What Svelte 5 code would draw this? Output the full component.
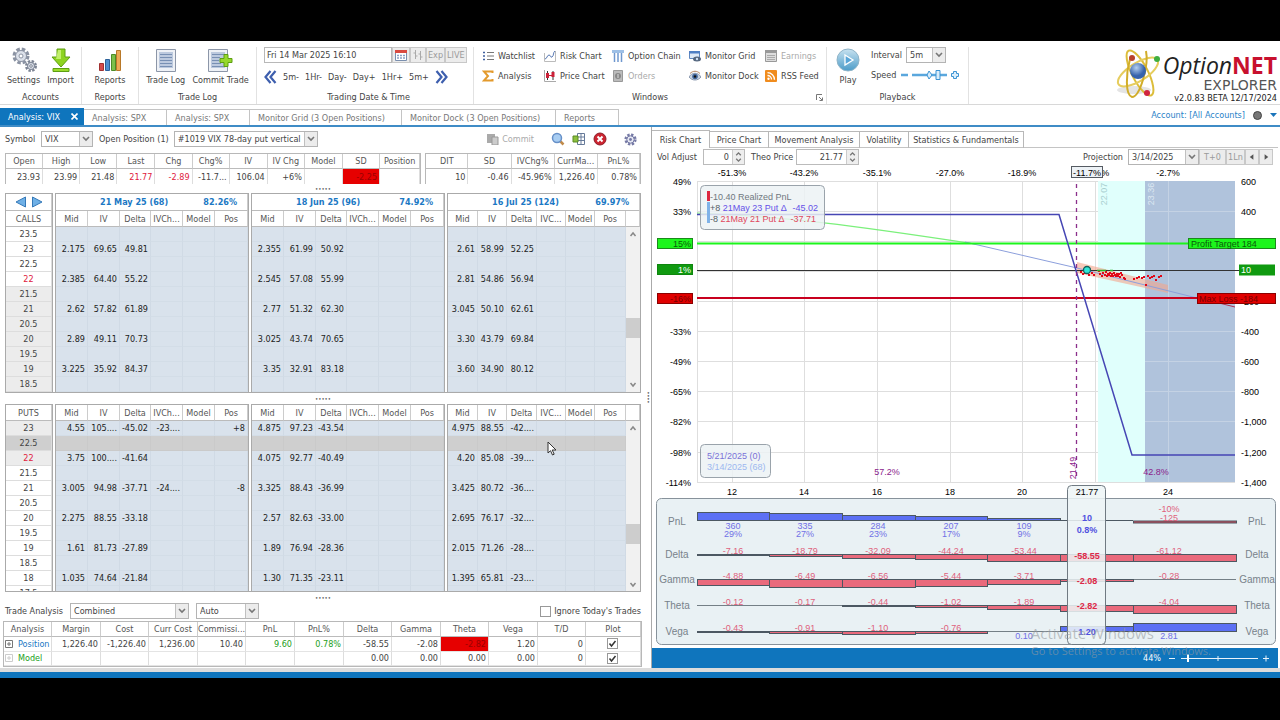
<script>
  const sep = (h, rows, cols) => ({ h, rows, cols });

  const quotes = sep(
    ['Open', 'High', 'Low', 'Last', 'Chg', 'Chg%', 'IV', 'IV Chg', 'Model', 'SD', 'Position'],
    ['23.93', '23.99', '21.48', '21.77', '-2.89', '-11.7...', '106.04', '+6%', '', '-2.25', ''],
    [37, 37, 37, 38, 37, 37, 38, 37, 38, 37, 40]
  );
  const trade = sep(
    ['DIT', 'SD', 'IVChg%', 'CurrMa...', 'PnL%'],
    ['10', '-0.46', '-45.96%', '1,226.40', '0.78%'],
    [42, 43, 43, 43, 42]
  );

  const wide = [32, 32, 31, 32, 32, 33];
  const tight = [30, 29, 30, 29, 29, 31, 14];

  const callStrikes = ['23.5', '23', '22.5', '22', '21.5', '21', '20.5', '20', '19.5', '19', '18.5'];
  const putStrikes = ['23', '22.5', '22', '21.5', '21', '20.5', '20', '19.5', '19', '18.5', '18', '17.5'];

  const expiries = [
    {
      name: '21 May 25 (68)', pct: '82.26%', ivch: 'IVCh...', cols: wide,
      calls: { 23: ['2.175', '69.65', '49.81'], 22: ['2.385', '64.40', '55.22'], 21: ['2.62', '57.82', '61.89'], 20: ['2.89', '49.11', '70.73'], 19: ['3.225', '35.92', '84.37'] },
      puts: { 23: ['4.55', '105....', '-45.02', '-23....', '', '+8'], 22: ['3.75', '100....', '-41.64'], 21: ['3.005', '94.98', '-37.71', '-24....', '', '-8'], 20: ['2.275', '88.55', '-33.18'], 19: ['1.61', '81.73', '-27.89'], 18: ['1.035', '74.64', '-21.84'] }
    },
    {
      name: '18 Jun 25 (96)', pct: '74.92%', ivch: 'IVCh...', cols: wide,
      calls: { 23: ['2.355', '61.99', '50.92'], 22: ['2.545', '57.08', '55.99'], 21: ['2.77', '51.32', '62.30'], 20: ['3.025', '43.74', '70.65'], 19: ['3.35', '32.91', '83.18'] },
      puts: { 23: ['4.875', '97.23', '-43.54'], 22: ['4.075', '92.77', '-40.49'], 21: ['3.325', '88.43', '-36.99'], 20: ['2.57', '82.63', '-33.00'], 19: ['1.89', '76.94', '-28.36'], 18: ['1.30', '71.35', '-23.11'] }
    },
    {
      name: '16 Jul 25 (124)', pct: '69.97%', ivch: 'IVC...', cols: tight, scroll: true,
      calls: { 23: ['2.61', '58.99', '52.25'], 22: ['2.81', '54.86', '56.94'], 21: ['3.045', '50.10', '62.61'], 20: ['3.30', '43.79', '69.84'], 19: ['3.60', '34.90', '80.12'] },
      puts: { 23: ['4.975', '88.55', '-42....'], 22: ['4.20', '85.08', '-39....'], 21: ['3.425', '80.72', '-36....'], 20: ['2.695', '76.17', '-32....'], 19: ['2.015', '71.26', '-28....'], 18: ['1.395', '65.81', '-23....'] }
    }
  ];

  const analysisHead = ['Analysis', 'Margin', 'Cost', 'Curr Cost', 'Commissi...', 'PnL', 'PnL%', 'Delta', 'Gamma', 'Theta', 'Vega', 'T/D', 'Plot'];
  const analysisCols = [48, 49, 48, 49, 48, 49, 49, 48, 49, 48, 49, 48, 55];
  const analysisRows = [
    { name: 'Position', cells: ['1,226.40', '-1,226.40', '1,236.00', '10.40', '9.60', '0.78%', '-58.55', '-2.08', '-2.82', '1.20', '0'] },
    { name: 'Model', cells: ['', '', '', '', '', '', '0.00', '0.00', '0.00', '0.00', '0'] }
  ];

  const docTabs = [
    ['Analysis: SPX', 83], ['Analysis: SPX', 83], ['Monitor Grid (3 Open Positions)', 152],
    ['Monitor Dock (3 Open Positions)', 154], ['Reports', 63]
  ];
  const chartTabs = [['Price Chart', 59], ['Movement Analysis', 91], ['Volatility', 49], ['Statistics & Fundamentals', 115]];
  const steps = ['5m-', '1Hr-', 'Day-', 'Day+', '1Hr+', '5m+'];

  const gridX = [732, 804, 877, 950, 1022, 1095, 1168];
  const gridY = [181, 211, 241, 271, 301, 331, 361, 391, 421, 452, 482];
  const top = [[732, '-51.3%'], [804, '-43.2%'], [877, '-35.1%'], [950, '-27.0%'], [1022, '-18.9%'], [1095, '-10.8%'], [1168, '-2.7%']];
  const bottom = [[732, '12'], [804, '14'], [877, '16'], [950, '18'], [1022, '20'], [1168, '24']];
  const left = [[181, '49%'], [211, '33%'], [331, '-33%'], [361, '-49%'], [391, '-65%'], [421, '-82%'], [452, '-98%'], [482, '-114%']];
  const right = [[181, '600'], [211, '400'], [301, '-200'], [331, '-400'], [361, '-600'], [391, '-800'], [421, '-1,000'], [452, '-1,200'], [482, '-1,400']];

  const edges = [697, 769, 842, 915, 987, 1060, 1133, 1236];
  const mid = [733, 805, 878, 951, 1024, 0, 1169];
  const greeks = [
    { name: 'Delta', base: 554, size: [1, 2, 4, 5, 7, 7, 7], text: ['-7.16', '-18.79', '-32.09', '-44.24', '-53.44', '', '-61.12'] },
    { name: 'Gamma', base: 579, size: [6, 8, 8, 7, 5, 2, 0], text: ['-4.88', '-6.49', '-6.56', '-5.44', '-3.71', '', '-0.28'] },
    { name: 'Theta', base: 605, size: [0, 0, 1, 2, 4, 6, 8], text: ['-0.12', '-0.17', '-0.44', '-1.02', '-1.89', '', '-4.04'] },
    { name: 'Vega', base: 631, size: [1, 2, 3, 2, 0, -5, -8], text: ['-0.43', '-0.91', '-1.10', '-0.76', '', '', ''] }
  ];
  const pnl = [[9, '360', '29%'], [8, '335', '27%'], [6, '284', '23%'], [5, '207', '17%'], [3, '109', '9%']];
  const trail = [
    [1080, 271], [1082, 273], [1084, 272], [1088, 274], [1091, 272], [1093, 274], [1098, 270], [1099, 273], [1101, 275], [1102, 272], [1104, 274], [1105, 271],
    [1106, 275], [1107, 273], [1108, 274], [1109, 272], [1110, 275], [1111, 273], [1112, 275], [1113, 272], [1114, 274], [1115, 275], [1116, 273], [1117, 275],
    [1118, 273], [1119, 276], [1120, 272], [1121, 274], [1123, 277], [1124, 278], [1133, 278], [1136, 277], [1138, 276], [1141, 277], [1143, 276], [1147, 275],
    [1149, 277], [1151, 276], [1153, 275], [1155, 279], [1158, 276], [1160, 275], [1145, 284]
  ];
</script>

{#snippet chev()}
  <svg class="chev" viewBox="0 0 8 6" width="8" height="6" aria-hidden="true"><path d="M1 1l3 3 3-3" fill="none" stroke="#777" stroke-width="1.6" /></svg>
{/snippet}

{#snippet spin()}
  <svg class="spin" viewBox="0 0 12 14" width="12" height="14" aria-hidden="true"><path d="M3.500 5L6 2.500 8.500 5M3.500 9L6 11.500 8.500 9" fill="none" stroke="#777" stroke-width="1.500" /></svg>
{/snippet}

{#snippet scrollbar(pos)}
  <div class="scroll">
    <svg viewBox="0 0 14 14"><path d="M4.500 9L7 6l2.500 3" fill="none" stroke="#888" stroke-width="1.500" /></svg>
    <span style="flex:{pos[0]}"></span><i></i><span style="flex:{pos[1]}"></span>
    <svg viewBox="0 0 14 14"><path d="M4.500 5L7 8l2.500-3" fill="none" stroke="#888" stroke-width="1.500" /></svg>
  </div>
{/snippet}

{#snippet simple(t)}
  <table class="quote">
    <colgroup>{#each t.cols as w}<col style="width:{w}px" />{/each}</colgroup>
    <thead><tr>{#each t.h as h}<th>{h}</th>{/each}</tr></thead>
    <tbody>
      <tr>{#each t.rows as v}<td class:neg={v === '21.77' || v === '-2.89'} class:alarm={v === '-2.25'}>{v}</td>{/each}</tr>
    </tbody>
  </table>
{/snippet}

{#snippet chain(e, side)}
  {@const strikes = side === 'calls' ? callStrikes : putStrikes}
  <table class="chain">
    <colgroup>{#each e.cols as w}<col style="width:{w}px" />{/each}</colgroup>
    <thead>
      {#if side === 'calls'}
        <tr class="expiry"><th colspan={e.cols.length}><div><b>{e.name}</b><b>{e.pct}</b></div></th></tr>
      {/if}
      <tr>{#each ['Mid', 'IV', 'Delta', e.ivch, 'Model', 'Pos'] as h}<th>{h}</th>{/each}{#if e.scroll}<th></th>{/if}</tr>
    </thead>
    <tbody>
      {#each strikes as s, r}
        <tr class:sel={side === 'puts' && s === '22.5'}>
          {#each [0, 1, 2, 3, 4, 5] as c}<td>{e[side][s]?.[c] ?? ''}</td>{/each}
          {#if e.scroll && r === 0}
            <td class="bar" rowspan={strikes.length}>{@render scrollbar(side === 'calls' ? [77, 40] : [90, 35])}</td>
          {/if}
        </tr>
      {/each}
    </tbody>
  </table>
{/snippet}

<div class="app">
  <header class="ribbon">
    <section style="width:82px">
      <div class="tools">
        <button class="big"><svg width="26" height="26" viewBox="0 0 26 26">
          <circle cx="10" cy="9" r="6" fill="none" stroke="#8b93a3" stroke-width="5" stroke-dasharray="3 1.700" /><circle cx="10" cy="9" r="5.500" fill="#dce1ea" stroke="#8b93a3" /><circle cx="10" cy="9" r="2" fill="#fff" stroke="#8b93a3" />
          <circle cx="20" cy="19" r="4" fill="none" stroke="#7c8494" stroke-width="4" stroke-dasharray="2 1.140" /><circle cx="20" cy="19" r="3.500" fill="#dce1ea" stroke="#7c8494" /><circle cx="20" cy="19" r="1.300" fill="#fff" stroke="#7c8494" />
        </svg>Settings</button>
        <button class="big"><svg width="26" height="26" viewBox="0 0 26 26"><path d="M9 2h8v8h5l-9 10-9-10h5z" fill="#8ed321" stroke="#5d9e12" /><path d="M10 3h3v9H8z" fill="#c2f06b" /><path d="M5 21.500h16v3H5z" fill="#9bdc2b" stroke="#5d9e12" /></svg>Import</button>
      </div><h2>Accounts</h2>
    </section>
    <section style="width:57px">
      <div class="tools"><button class="big"><svg width="26" height="26" viewBox="0 0 26 26"><path d="M2.500 16.500h4v7h-4z" fill="#d64b4b" stroke="#a03030" /><path d="M8.500 12.500h4v11h-4z" fill="#4e8fd0" stroke="#2d629a" /><path d="M14.500 7.500h4v16h-4z" fill="#7cc04a" stroke="#4d8c27" /><path d="M19.500 3.500h4v20h-4z" fill="#efaa55" stroke="#b87828" /></svg>Reports</button></div><h2>Reports</h2>
    </section>
    <section style="width:118px">
      <div class="tools">
        <button class="big"><svg width="26" height="26" viewBox="0 0 26 26"><path d="M3.500 2.500h19v22h-19z" fill="#eef1f6" stroke="#8c96a8" /><path d="M6 5h14v16H6z" fill="#bcc9de" /><path d="M7 7.500h12M7 10.500h12M7 13.500h12M7 16.500h12M7 19.500h12" stroke="#7890b4" /></svg>Trade Log</button>
        <button class="big"><svg width="28" height="26" viewBox="0 0 28 26"><path d="M1.500 2.500h19v22h-19z" fill="#eef1f6" stroke="#8c96a8" /><path d="M4 5h14v16H4z" fill="#bcc9de" /><path d="M5 7.500h12M5 10.500h8M5 13.500h7M5 16.500h9M5 19.500h12" stroke="#7890b4" /><path d="M17 7.500h4v4h4v4h-4v4h-4v-4h-4v-4h4z" fill="#96d82c" stroke="#5d9e12" /></svg>Commit Trade</button>
      </div><h2>Trade Log</h2>
    </section>
    <section class="time" style="width:217px">
      <div class="daterow">
        <input class="date" aria-label="Trading date" value="Fri 14 Mar 2025 16:10" />
        <button class="flat" aria-label="Calendar"><svg width="14" height="13" viewBox="0 0 14 13"><path d="M1.500 1.500h11v10h-11z" fill="#fff" stroke="#7a8fae" /><path d="M1 1h12v3H1z" fill="#d94a40" /><path d="M3 6.500h8M3 9h8" stroke="#8aa0c4" stroke-dasharray="2 1" stroke-width="1.500" /></svg></button>
        <button class="flat" aria-label="Bars"><svg width="12" height="12" viewBox="0 0 12 12"><path d="M3.500 1v9M1.500 4h2M3.500 7h2M8.500 2v9M6.500 5h2M8.500 8h2" stroke="#aaa" fill="none" /></svg></button>
        <button class="flat">Exp</button><button class="flat">LIVE</button>
      </div>
      <div class="steprow">
        <button aria-label="Back"><svg width="13" height="14" viewBox="0 0 13 14"><path d="M6.500 1L1.500 7l5 6M11.500 1l-5 6 5 6" fill="none" stroke="#3e5fae" stroke-width="2.200" /></svg></button>
        {#each steps as s}<button>{s}</button>{/each}
        <button aria-label="Forward"><svg width="13" height="14" viewBox="0 0 13 14"><path d="M1.500 1l5 6-5 6M6.500 1l5 6-5 6" fill="none" stroke="#3e5fae" stroke-width="2.200" /></svg></button>
      </div>
      <h2>Trading Date &amp; Time</h2>
    </section>
    <section style="width:353px">
      <div class="wins">
        <button><svg width="12" height="12" viewBox="0 0 12 12"><path d="M1 2.500h2M1 6h2M1 9.500h2" stroke="#3f5f9f" stroke-width="1.500" /><path d="M5 2.500h7M5 6h7M5 9.500h7" stroke="#777" /></svg>Watchlist</button>
        <button><svg width="12" height="12" viewBox="0 0 12 12"><path d="M.5 3v8.500h11V1" fill="none" stroke="#bbb" /><path d="M1 9c2 0 2-4 4-4s1 3 3 2 1-5 3-6" fill="none" stroke="#5b7bb5" /></svg>Risk Chart</button>
        <button><svg width="12" height="12" viewBox="0 0 12 12"><path d="M0 0h12v3H0z" fill="#9dbfe6" /><path d="M2.500 3v9M6 3v9M9.500 3v9" stroke="#6f98cf" stroke-width="1.500" /></svg>Option Chain</button>
        <button><svg width="12" height="12" viewBox="0 0 12 12"><path d="M.5 1.500h10v7H.5z" fill="#dfeaf7" stroke="#5d86bf" /><path d="M0 1h11v2.500H0z" fill="#4f7fc4" /><ellipse cx="8" cy="9" rx="4" ry="2.500" fill="#55677f" /><circle cx="8" cy="9" r="1.200" fill="#cfe0f5" /></svg>Monitor Grid</button>
        <button disabled><svg width="12" height="12" viewBox="0 0 12 12"><path d="M.5 .5h11v11H.5z" fill="#ddd" stroke="#999" /><path d="M0 0h12v3H0z" fill="#999" /><path d="M2 5.500h8M2 7.500h8M2 9.500h8" stroke="#aaa" /></svg>Earnings</button>
        <button><svg width="12" height="12" viewBox="0 0 12 12"><path d="M10.500 3V1.500H2L6 6l-4 4.500h8.500V9" fill="none" stroke="#e39a2c" stroke-width="2" /></svg>Analysis</button>
        <button><svg width="12" height="12" viewBox="0 0 12 12"><path d="M.5 0v11.500H12" fill="none" stroke="#aaa" /><path d="M3.500 1v9M9 1v9" stroke="#333" /><path d="M2 3h3v5H2zM7.500 2h3v5h-3z" fill="#cb2138" /><path d="M5 5.500h3" stroke="#cb2138" /></svg>Price Chart</button>
        <button disabled><svg width="12" height="12" viewBox="0 0 12 12"><path d="M1.500 .5h9v11h-9z" fill="#bbb" stroke="#999" /><circle cx="6" cy="6" r="3" fill="#888" /><path d="M6 4v4" stroke="#ddd" /></svg>Orders</button>
        <button><svg width="12" height="12" viewBox="0 0 12 12"><path d="M0 7c3-5 9-5 12 0-3 4-9 4-12 0z" fill="#c9d3e0" stroke="#8c9ab0" /><circle cx="6" cy="6.500" r="2.800" fill="#43679c" /><circle cx="6" cy="6.500" r="1.200" fill="#111" /><path d="M1 3.500c3-3 7-3 10 0" fill="none" stroke="#b3825e" /></svg>Monitor Dock</button>
        <button><svg width="12" height="12" viewBox="0 0 12 12"><rect width="12" height="12" rx="1" fill="#f08c1e" /><circle cx="3.500" cy="8.700" r="1.200" fill="#fff" /><path d="M2.500 5.500a4 4 0 0 1 4 4M2.500 2.700a7 7 0 0 1 7 7" fill="none" stroke="#fff" stroke-width="1.300" /></svg>RSS Feed</button>
      </div><h2>Windows</h2>
      <svg class="launch" width="7" height="7" viewBox="0 0 7 7"><path d="M.5 6V.5H6M3 3l3 3M6.500 3.500v3h-3" fill="none" stroke="#777" /></svg>
    </section>
    <section style="width:142px">
      <div class="tools play">
        <button class="big"><svg width="26" height="26" viewBox="0 0 26 26"><defs><linearGradient id="pl" x2="0" y2="1"><stop offset="0" stop-color="#c8e2f0" /><stop offset="1" stop-color="#4b9bc8" /></linearGradient></defs><circle cx="13" cy="13" r="11" fill="url(#pl)" stroke="#8fb4c8" /><path d="M10 8l8 5-8 5z" fill="#58a5d8" stroke="#fff" stroke-width="1.300" /></svg>Play</button>
        <div class="ctl">
          <label>Interval <span class="sel-box" style="width:40px"><select><option>5m</option></select>{@render chev()}</span></label>
          <label>Speed <svg width="60" height="12" viewBox="0 0 60 12"><path d="M1 6h7M12 6h35" stroke="#5aa7dd" stroke-width="2.400" /><path d="M27 6l2-4 3 4-3 4zM36 1.500h4v9h-4z" fill="#d9edfb" stroke="#3b93d3" /><path d="M53.500 4.500v-2h3v2h2v3h-2v2h-3v-2h-2v-3z" fill="#d9edfb" stroke="#3b93d3" /></svg></label>
        </div>
      </div><h2>Playback</h2>
    </section>
    <div class="brand">
      <svg width="50" height="54" viewBox="0 0 50 54">
        <defs><radialGradient id="nuc" cx=".4" cy=".3"><stop offset="0" stop-color="#b5d0f0" /><stop offset="1" stop-color="#3662ac" /></radialGradient></defs>
        <ellipse cx="21" cy="43" rx="17" ry="4" fill="#e4e4e4" />
        <g fill="none" stroke="#dcbd3a" stroke-width="2"><ellipse cx="27" cy="26" rx="8" ry="25" transform="rotate(-27 27 26)" /><ellipse cx="25" cy="25" rx="9" ry="23" transform="rotate(58 25 25)" stroke="#e6cd5e" /><path d="M33 4c3 14-6 46-14 46-7-2-6-24-2-38" stroke="#d1ad2a" /></g>
        <circle cx="25" cy="24" r="8" fill="url(#nuc)" /><circle cx="19" cy="11" r="3" fill="#b8412b" /><circle cx="44" cy="12" r="3" fill="#3fae3f" /><circle cx="34" cy="46" r="3" fill="#d0243f" />
      </svg>
      <div><p class="word">Option<b>NET</b></p><p class="sub">EXPLORER</p><p class="ver">v2.0.83 BETA 12/17/2024</p></div>
    </div>
  </header>

  <nav class="doctabs">
    <button class="on">Analysis: VIX <svg width="7" height="7" viewBox="0 0 7 7"><path d="M.5 .5l6 6M6.500 .5l-6 6" stroke="#fff" stroke-width="1.600" /></svg></button>
    {#each docTabs as [t, w]}<button style="width:{w}px">{t}</button>{/each}
    <div class="acct"><a href="#accounts">Account: [All Accounts]</a><i></i><svg width="7" height="5" viewBox="0 0 7 5"><path d="M0 0h7L3.500 4z" fill="#1b75bb" /></svg></div>
  </nav>

  <main>
    <section class="left">
      <div class="row">
        <label for="sym" style="width:36px">Symbol</label>
        <span class="sel-box" style="width:52px"><select id="sym"><option>VIX</option></select>{@render chev()}</span>
        <label for="pos" class="op">Open Position (1)</label>
        <span class="sel-box" style="width:144px"><select id="pos"><option>#1019 VIX 78-day put vertical</option></select>{@render chev()}</span>
        <div class="acts">
          <button disabled><svg width="12" height="12" viewBox="0 0 12 12"><path d="M0 1h8v9H0z" fill="#aaa" /><path d="M5 4h6v8H5z" fill="#ccc" stroke="#999" /></svg>Commit</button>
          <button aria-label="Search"><svg width="14" height="14" viewBox="0 0 14 14"><path d="M8.500 8.500l4 4" stroke="#c08a4a" stroke-width="2.500" /><circle cx="6" cy="6" r="4.500" fill="#a8cdf2" stroke="#6690c8" stroke-width="1.500" /></svg></button>
          <button aria-label="Layout"><svg width="14" height="14" viewBox="0 0 14 14"><path d="M5.500 1.500h7v11h-7zM5.500 5h7M5.500 8.500h7M9 1.500v11" fill="#fff" stroke="#667a99" /><path d="M1 4h5v6H1z" fill="#8cc03e" stroke="#5a8a22" /></svg></button>
          <button aria-label="Close"><svg width="14" height="14" viewBox="0 0 14 14"><circle cx="7" cy="7" r="6" fill="#cc2430" stroke="#8e1b26" /><path d="M4.500 4.500l5 5M9.500 4.500l-5 5" stroke="#fff" stroke-width="2" /></svg></button>
          <button class="cog" aria-label="Options"><svg width="13" height="13" viewBox="0 0 13 13"><circle cx="6.500" cy="6.500" r="4.800" fill="none" stroke="#7579a5" stroke-width="2.600" stroke-dasharray="2.300 1.470" /><circle cx="6.500" cy="6.500" r="3.700" fill="#e6e8f2" stroke="#7579a5" /><circle cx="6.500" cy="6.500" r="1.400" fill="#7579a5" /></svg></button>
        </div>
      </div>

      <div class="quotes"><div style="flex:415">{@render simple(quotes)}</div><div style="flex:215">{@render simple(trade)}</div></div>
      <div class="grip top">•••••</div>

      <div class="chains calls">
        <table class="chain strikes">
          <thead>
            <tr class="expiry"><th><svg width="28" height="12" viewBox="0 0 28 12"><path d="M10.500 1v10L1 6zM17.500 1v10L27 6z" fill="#6fb0e6" stroke="#3579b8" /></svg></th></tr>
            <tr><th>CALLS</th></tr>
          </thead>
          <tbody>{#each callStrikes as s, i}<tr><td class:gray={i > 3} class:red={s === '22'}>{s}</td></tr>{/each}</tbody>
        </table>
        {#each expiries as e}{@render chain(e, 'calls')}{/each}
      </div>
      <div class="grip">•••••</div>
      <div class="chains puts">
        <table class="chain strikes">
          <thead><tr><th>PUTS</th></tr></thead>
          <tbody>{#each putStrikes as s, i}<tr class:sel={s === '22.5'}><td class:gray={i < 3} class:red={s === '22'}>{s}</td></tr>{/each}</tbody>
        </table>
        {#each expiries as e}{@render chain(e, 'puts')}{/each}
      </div>
      <div class="grip">•••••</div>

      <div class="row">
        <label for="ta" style="width:65px">Trade Analysis</label>
        <span class="sel-box" style="width:119px"><select id="ta"><option>Combined</option></select>{@render chev()}</span>
        <span class="sel-box auto" style="width:63px"><select aria-label="Mode"><option>Auto</option></select>{@render chev()}</span>
        <label class="ignore"><input type="checkbox" />Ignore Today's Trades</label>
      </div>
      <table class="analysis">
        <colgroup>{#each analysisCols as w}<col style="width:{w}px" />{/each}</colgroup>
        <thead><tr>{#each analysisHead as h}<th>{h}</th>{/each}</tr></thead>
        <tbody>
          {#each analysisRows as r, i}
            <tr>
              <td class="name" class:model={i}><div><svg width="8" height="8" viewBox="0 0 8 8"><path d="M.5 .5h7v7h-7zM2 4h4M4 2v4" fill="none" stroke="currentColor" /></svg>{r.name}</div></td>
              {#each r.cells as c}<td class:pos={c === '9.60' || c === '0.78%'} class:alarm={c === '-2.82'}>{c}</td>{/each}
              <td class="plot"><input type="checkbox" checked aria-label="Plot {r.name}" /></td>
            </tr>
          {/each}
        </tbody>
      </table>
      <svg class="pointer" width="10" height="16" viewBox="0 0 10 16"><path d="M1 1v11l2.500-2.300 2 4.300 1.700-.8-2-4.200H9z" fill="#fff" stroke="#333" /></svg>
      <div class="vgrip">•<br />•<br />•<br />•</div>
    </section>

    <section class="right">
      <nav class="charttabs"><button class="on">Risk Chart</button>{#each chartTabs as [t, w]}<button style="width:{w}px">{t}</button>{/each}</nav>
      <div class="row ctrls">
        <label for="vol" style="width:46px">Vol Adjust</label>
        <span class="num" style="width:42px"><input id="vol" value="0" />{@render spin()}</span>
        <label for="theo" style="width:45px">Theo Price</label>
        <span class="num" style="width:63px"><input id="theo" value="21.77" />{@render spin()}</span>
        <div class="proj">
          <label for="prj">Projection</label>
          <span class="sel-box" style="width:71px"><select id="prj"><option>3/14/2025</option></select>{@render chev()}</span>
          <button class="flat" style="width:27px">T+0</button><button class="flat" style="width:19px">1Ln</button>
          <button class="flat" aria-label="Previous"><svg width="10" height="8" viewBox="0 0 11 8"><path d="M7 1v6L3 4z" fill="#555" /></svg></button><button class="flat" aria-label="Next"><svg width="10" height="8" viewBox="0 0 11 8"><path d="M4 1v6l4-3z" fill="#555" /></svg></button>
        </div>
      </div>

      <svg class="chart" viewBox="652 166 626 482" role="img" aria-label="Risk chart">
        <g stroke="#dedede" fill="none">
          {#each gridX as x}<path d="M{x + 0.5} 181V482" />{/each}
          {#each gridY as y}<path d="M697 {y + 0.5}H1235" />{/each}
          <path d="M697.500 181V482" />
        </g>
        <rect x="1098" y="181" width="47" height="301" fill="#e0fffc" /><rect x="1145" y="181" width="90" height="301" fill="#b0c3dc" />
        <path d="M1168.500 181V482M1145 211.500h90M1145 331.500h90M1145 361.500h90M1145 391.500h90M1145 421.500h90" stroke="#c4d2e4" />
        <path d="M1077 262L1168 285V293L1077 273z" fill="#f3a58c" fill-opacity=".6" />
        <path d="M697 213C790 217 850 225 975 244" fill="none" stroke="#7bf07b" stroke-width="1.200" />
        <path d="M965 242L1077 268L1197 298" fill="none" stroke="#8c9fdc" /><path d="M1215 302l20 5" stroke="#b03050" />
        <path d="M697 243.500H1190" stroke="#1cf51c" stroke-width="2" /><path d="M697 270.500H1239" stroke="#333" />
        <path d="M697 298H1198" stroke="#c8001e" stroke-width="2" />
        <path d="M697 214.500H1059L1132 455H1235" fill="none" stroke="#4646b4" stroke-width="1.500" />
        <path d="M1076.500 184V480" stroke="#8b2f8b" stroke-dasharray="4 4" stroke-width="1.300" />
        {#each trail as [x, y]}<rect {x} {y} width="2" height="2" fill="#e00818" />{/each}
        <path d="M1097 270.500h9M1110 270.500h3" stroke="#2ab52a" stroke-width="1.500" />
        <circle cx="1087" cy="270" r="3.500" fill="#30e8d8" stroke="#15615c" stroke-width="1.300" />

        <g class="ax" text-anchor="middle">
          {#each top as [x, t]}<text {x} y="176">{t}</text>{/each}
          <rect x="1071.500" y="166.500" width="31" height="11" fill="#edf2f6" stroke="#555b62" /><text x="1087" y="176">-11.7%</text>
          {#each bottom as [x, t]}<text {x} y="495">{t}</text>{/each}
        </g>
        <g class="ax" text-anchor="end">{#each left as [y, t]}<text x="691" y={y + 4}>{t}</text>{/each}</g>
        <g class="ax">{#each right as [y, t]}<text x="1241" y={y + 4}>{t}</text>{/each}</g>
        <g stroke-width="1">
          <rect x="657.500" y="238.500" width="35" height="10" fill="#1cf51c" stroke="#1a8a1a" /><rect x="657.500" y="264.500" width="35" height="10" fill="#109a10" stroke="#0e860e" /><rect x="657.500" y="293.500" width="35" height="10" fill="#e00000" stroke="#8c0000" />
          <rect x="1188.500" y="238.500" width="87" height="10" fill="#1cf51c" stroke="#1a8a1a" /><rect x="1239" y="264.500" width="36" height="11" fill="#109a10" /><rect x="1197.500" y="293.500" width="78" height="10" fill="#e00000" stroke="#8c0000" />
        </g>
        <g class="ax"><text x="691" y="247" text-anchor="end" fill="#0a5a0a">15%</text><text x="691" y="273" text-anchor="end" fill="#fff">1%</text><text x="691" y="302" text-anchor="end" fill="#700">-16%</text>
          <text x="1191" y="247" fill="#0a5a0a">Profit Target 184</text><text x="1241" y="273" fill="#fff">10</text><text x="1199" y="302" fill="#700">Max Loss -184</text></g>
        <g class="ax" text-anchor="middle"><text x="887" y="475" fill="#8b1c8b">57.2%</text><text x="1156" y="475" fill="#8b1c8b">42.8%</text>
          <text transform="translate(1076 468) rotate(-90)" fill="#8b1c8b">21.49</text><text transform="translate(1107 194) rotate(-90)" fill="#a9cfd0">22.07</text><text transform="translate(1154 194) rotate(-90)" fill="#dde8f2">23.36</text></g>

        <g fill="#ecf2f5" fill-opacity=".85" stroke="#9aa3ab"><rect x="700.500" y="185.500" width="124" height="44" rx="4" /><rect x="700.500" y="444.500" width="70" height="33" rx="4" /></g>
        <path d="M707 191h3v10h-3z" fill="#dc2840" /><path d="M707 202h3v21h-3z" fill="#7fb2e8" />
        <g class="ax"><text x="710" y="200" fill="#707880">-10.40 Realized PnL</text>
          <text x="710" y="211" fill="#555e66">+8 <tspan fill="#6450e8">21May 23 Put Δ</tspan></text><text x="818" y="211" fill="#6450e8" text-anchor="end">-45.02</text>
          <text x="710" y="222" fill="#555e66">-8 <tspan fill="#e04860">21May 21 Put Δ</tspan></text><text x="816" y="222" fill="#e04860" text-anchor="end">-37.71</text>
          <text x="707" y="459" fill="#7a72d8">5/21/2025 (0)</text><text x="707" y="470" fill="#9db8f0">3/14/2025 (68)</text></g>

        <rect x="656.500" y="498.500" width="619" height="146" rx="5" fill="#e9f1f4" stroke="#87929b" />
        <g stroke="#4c5862">
          {#each pnl as [h], i}<rect x={edges[i] + 0.5} y={521 - h + 0.5} width={edges[i + 1] - edges[i]} height={h - 1} fill="#5c70f4" />{/each}
          <path d="M1060 520.500h73" /><rect x="1133.500" y="521" width="103" height="2" fill="#c84858" />
          {#each greeks as g}
            <path d="M697 {g.base + 0.5}H1236" stroke-opacity=".75" />
            {#each g.size as s, i}
              {#if s}<rect x={edges[i] + 0.5} y={(s < 0 ? g.base + s : g.base) + 0.5} width={edges[i + 1] - edges[i]} height={Math.abs(s)} fill={s < 0 ? '#5c70f4' : '#ea6a7c'} />{/if}
            {/each}
          {/each}
        </g>
        <g class="ax" text-anchor="middle" fill="#df5f7c">
          {#each greeks as g}{#each g.text as t, i}<text x={mid[i]} y={g.base}>{t}</text>{/each}{/each}
          <text x="1169" y="512">-10%</text><text x="1169" y="521">-125</text>
          <g fill="#7070e6">{#each pnl as [, a, b], i}<text x={mid[i]} y="529">{a}</text><text x={mid[i]} y="537">{b}</text>{/each}<text x="1024" y="639">0.10</text><text x="1169" y="639">2.81</text></g>
        </g>
        <g class="lab" text-anchor="middle">
          {#each [['PnL', 521], ...greeks.map((g) => [g.name, g.base])] as [n, y]}<text x="677" y={y + 4}>{n}</text><text x="1257" y={y + 4}>{n}</text>{/each}
        </g>
        <rect x="1067.500" y="485.500" width="38" height="159" rx="4" fill="#eef4f6" fill-opacity=".86" stroke="#707a82" />
        <g class="ax" text-anchor="middle"><text x="1087" y="495">21.77</text>
          <g class="strong" fill="#5050e0"><text x="1087" y="521">10</text><text x="1087" y="533">0.8%</text><text x="1087" y="635">1.20</text></g>
          <g class="strong" fill="#dc2848"><text x="1087" y="559">-58.55</text><text x="1087" y="584">-2.08</text><text x="1087" y="609">-2.82</text></g>
        </g>
      </svg>
      <footer><span>44%</span><svg width="106" height="12" viewBox="0 0 106 12"><path d="M5 6.500h6M17 6.500h77M24 2v8M54 4v5M99 6.500h6M102 3.500v6" stroke="#e8f3fb" /><path d="M23 3v7h2V3z" fill="#fff" /></svg></footer>
      <div class="notice"><p>Activate Windows</p><p>Go to Settings to activate Windows.</p></div>
    </section>
  </main>
  <div class="status"></div>
</div>

<style>
  :global(body) { margin: 0; background: #000; }
  :global(*) { box-sizing: border-box; }
  .app { margin-top: 41px; background: #fff; color: #444; font: 9px/12px "DejaVu Sans Condensed", "DejaVu Sans", sans-serif; }
  button, input, select { font: inherit; color: inherit; margin: 0; padding: 0; border: 0; background: none; border-radius: 0; white-space: nowrap; }
  button:disabled { color: #aaa; }
  h2, p { margin: 0; font: inherit; }
  svg { display: block; flex: none; }

  .ribbon { display: flex; height: 64px; border-bottom: 1px solid #d8d8d8; padding-top: 6px; }
  .ribbon section { position: relative; display: flex; flex-direction: column; justify-content: space-between; height: 57px; border-right: 1px solid #e2e2e2; padding-bottom: 1px; }
  .ribbon h2 { text-align: center; }
  .tools { display: flex; justify-content: space-evenly; }
  .big { display: flex; flex-direction: column; align-items: center; gap: 1px; }
  .time { padding-left: 7px; }
  .daterow, .steprow { display: flex; align-items: center; }
  .date { width: 128px; height: 16px; border: 1px solid #b8b8b8; padding-left: 2px; }
  .flat { display: flex; align-items: center; justify-content: center; height: 16px; border: 1px solid #c8c8c8; background: #ececec; color: #9a9a9a; padding: 0 1px; }
  .steprow { justify-content: space-between; width: 184px; }
  .wins { display: grid; grid-template-columns: 62px 68px 77px 76px 1fr; row-gap: 4px; padding: 1px 0 0 8px; }
  .wins button { display: flex; align-items: center; gap: 4px; height: 16px; }
  .launch { position: absolute; right: 3px; bottom: 3px; }
  .play { justify-content: flex-start; gap: 10px; padding-left: 8px; }
  .ctl { display: flex; flex-direction: column; gap: 4px; }
  .ctl label { display: flex; align-items: center; gap: 4px; height: 16px; }
  .brand { display: flex; margin-left: auto; padding-right: 3px; text-align: right; color: #222; }
  .word { font: italic 23px/30px "Open Sans", sans-serif; margin-top: 3px; }
  .word b { color: #c8102e; font-style: normal; }
  .sub { font: 14px/10px "DejaVu Sans", sans-serif; color: #555; }
  .ver { margin-top: 2px; }

  .doctabs { display: flex; align-items: flex-end; height: 22px; border-bottom: 2px solid #3f8cc6; }
  .doctabs button { height: 16px; border: 1px solid #c4c4c4; border-left: 0; border-bottom: 0; padding-left: 8px; text-align: left; color: #777; }
  .doctabs .on { display: flex; align-items: center; gap: 11px; width: 84px; height: 17px; background: #0f75bd; border: 0; color: #fff; }
  .acct { display: flex; align-items: center; align-self: center; gap: 8px; margin-left: auto; padding-right: 3px; }
  .acct a { color: #2a82c8; text-decoration: none; }
  .acct i { width: 9px; height: 9px; border-radius: 50%; background: #777; border: 1px solid #444; }

  main { display: grid; grid-template-columns: 651fr 629fr; }
  .left { position: relative; min-width: 0; padding: 4px 10px 1px 5px; border-left: 1px solid #bbb; margin-left: -1px; }
  .row { display: flex; align-items: center; height: 16px; white-space: nowrap; }
  .sel-box { position: relative; display: flex; height: 16px; border: 1px solid #b4b4b4; background: #fff; }
  .sel-box select { appearance: none; width: 100%; padding: 0 13px 0 3px; outline: 0; }
  .chev { position: absolute; right: 0; top: 0; width: 13px; height: 14px; padding: 3px 2px; background: #ececec; border-left: 1px solid #c0c0c0; pointer-events: none; }
  .op { margin: 0 5px 0 6px; }
  .acts { display: flex; align-items: center; gap: 7px; margin-left: auto; padding-right: 4px; }
  .acts button { display: flex; align-items: center; gap: 3px; }
  .acts button:first-child { margin-right: 10px; }
  .cog { margin-left: 10px; }
  .quotes { display: flex; gap: 4px; margin-top: 6px; }
  .quotes div { min-width: 0; }

  table { width: 100%; border-collapse: separate; border-spacing: 0; table-layout: fixed; white-space: nowrap; }
  th { font-weight: 400; text-align: center; padding: 0; overflow: hidden; border-right: 1px solid #ccc; border-bottom: 1px solid #bbb; color: #555; }
  td { padding: 0 2px 0 0; text-align: right; overflow: hidden; border-right: 1px solid #ddd; }
  .quote { height: 31px; border: 1px solid #b8b8b8; border-bottom: 0; }
  .quote th { height: 15px; }
  .neg, .red { color: #e0203c; }
  .alarm { background: #e60000; color: #900; }
  .pos { color: #22a022; }
  .grip { height: 11px; text-align: center; font-size: 6px; line-height: 11px; color: #666; }
  .grip.top { height: 9px; line-height: 9px; }
  .vgrip { position: absolute; right: 1px; top: 264px; font-size: 6px; line-height: 3px; color: #666; }

  .chains { display: grid; grid-template-columns: minmax(0, 48fr) minmax(0, 194fr) minmax(0, 194fr) minmax(0, 194fr); gap: 2px; overflow: hidden; border-bottom: 1px solid #aaa; }
  .calls { height: 200px; }
  .puts { height: 188px; }
  .chain { border: 1px solid #aaa; align-self: start; }
  .chain th { height: 16px; }
  .chain .expiry th { height: 17px; }
  .expiry div { display: flex; justify-content: space-between; padding: 0 10px 0 44px; color: #1b78c4; }
  .chain td { height: 15px; line-height: 14px; background: #d9e2ec; border-right: 1px solid #d0dae5; border-bottom: 1px solid #d3dde7; color: #222; }
  .chain .sel td { background: #cfcfcf; border-color: #cacaca; }
  .chain.strikes td { background: #fff; text-align: center; padding: 0; border-color: #ddd; color: #444; }
  .chain.strikes .gray { background: #ececec; }
  .chain.strikes .sel td { background: #cfcfcf; }
  .chain.strikes .red { color: #e0203c; }
  .expiry svg { margin: 0 auto; }
  .chain td.bar { background: #f1f1f1; padding: 0; border: 0; vertical-align: top; }
  .scroll { display: flex; flex-direction: column; height: 165px; }
  .puts .scroll { height: 171px; }
  .scroll svg { height: 14px; width: 100%; }
  .scroll i { height: 20px; background: #cdcdcd; }

  .auto { margin-left: 7px; }
  .ignore { display: flex; align-items: center; gap: 3px; margin-left: auto; }
  input[type='checkbox'] { appearance: none; width: 11px; height: 11px; border: 1px solid #999; background: #fff; }
  input[type='checkbox']:checked { background: #fff url("data:image/svg+xml,%3Csvg xmlns='http://www.w3.org/2000/svg' viewBox='0 0 9 9'%3E%3Cpath d='M1.500 4.500l2 2.500 4-5' fill='none' stroke='%23333' stroke-width='1.500'/%3E%3C/svg%3E") center / 9px 9px no-repeat; }
  .analysis { height: 46px; margin: 2px 0 0 -2px; width: calc(100% + 3px); border: 1px solid #b8b8b8; }
  .analysis th { height: 15px; }
  .analysis td { border-bottom: 1px solid #e4e4e4; }
  .name div { display: flex; align-items: center; gap: 5px; padding-left: 1px; }
  .name { color: #1b78c4; }
  .name.model { color: #22a022; }
  .name svg { color: #777; }
  .name.model svg { color: #ccc; }
  .plot { text-align: center; }
  .plot input { display: block; margin: 0 auto; }
  .pointer { position: absolute; left: 547px; top: 314px; }

  .right { position: relative; min-width: 0; display: flex; flex-direction: column; border-left: 1px solid #aaa; padding: 3px 2px 0 0; }
  .charttabs { display: flex; border-bottom: 1px solid #c4c4c4; height: 18px; }
  .charttabs button { border: 1px solid #b8b8b8; border-left: 0; border-bottom: 0; height: 17px; margin-top: 1px; }
  .charttabs .on { width: 58px; height: 18px; margin: 0; background: #fff; }
  .ctrls { margin: 1px 5px 1px 5px; }
  .num { display: flex; height: 16px; border: 1px solid #bbb; margin-right: 6px; }
  .num input { min-width: 0; width: 100%; text-align: right; padding-right: 3px; }
  .spin { background: #eee; border-left: 1px solid #ccc; }
  .proj { display: flex; align-items: center; margin-left: auto; }
  .proj label { margin-right: 5px; }
  .chart { width: 100%; height: auto; }
  .ax { font: 9px "Liberation Sans", sans-serif; }
  .lab { font: 10px "Liberation Sans", sans-serif; fill: #78828a; }
  .strong { font-weight: 700; }
  footer { display: flex; align-items: center; justify-content: flex-end; gap: 3px; height: 20px; padding-right: 8px; background: #0f75bd; color: #fff; }
  .notice { position: absolute; right: 69px; bottom: 8px; color: rgba(150, 155, 160, 0.6); font: 11px/18px "Open Sans", sans-serif; }
  .notice p:first-child { font-size: 15px; }
  .status { height: 10px; background: #0f75bd; border-top: 4px solid #dcdcdc; }
</style>
